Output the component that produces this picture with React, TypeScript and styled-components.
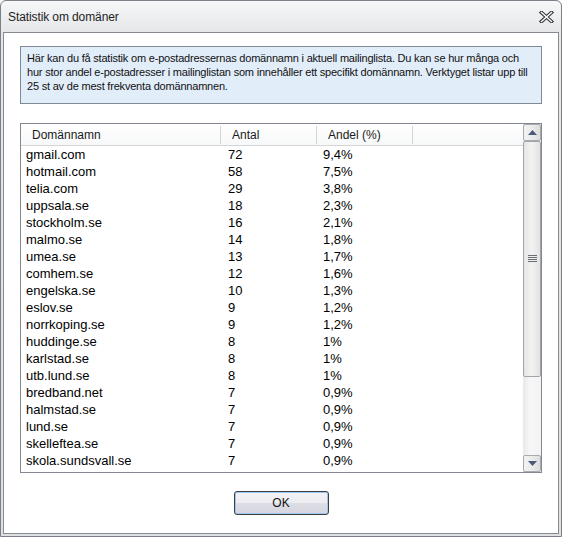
import React from 'react'
import styled, { createGlobalStyle } from 'styled-components'

const ROWS: [string, number, string][] = [
  ['gmail.com', 72, '9,4%'],
  ['hotmail.com', 58, '7,5%'],
  ['telia.com', 29, '3,8%'],
  ['uppsala.se', 18, '2,3%'],
  ['stockholm.se', 16, '2,1%'],
  ['malmo.se', 14, '1,8%'],
  ['umea.se', 13, '1,7%'],
  ['comhem.se', 12, '1,6%'],
  ['engelska.se', 10, '1,3%'],
  ['eslov.se', 9, '1,2%'],
  ['norrkoping.se', 9, '1,2%'],
  ['huddinge.se', 8, '1%'],
  ['karlstad.se', 8, '1%'],
  ['utb.lund.se', 8, '1%'],
  ['bredband.net', 7, '0,9%'],
  ['halmstad.se', 7, '0,9%'],
  ['lund.se', 7, '0,9%'],
  ['skelleftea.se', 7, '0,9%'],
  ['skola.sundsvall.se', 7, '0,9%'],
]

const GlobalStyle = createGlobalStyle`
  html, body {
    margin: 0;
    padding: 0;
    background: #ffffff;
  }
  * {
    box-sizing: border-box;
  }
`

const Window = styled.div`
  width: 562px;
  height: 537px;
  display: flex;
  flex-direction: column;
  border: 1px solid #7b8088;
  border-radius: 6px 6px 0 0;
  background: linear-gradient(#f6f7f8 0px, #e6e7e9 31px, #dfe0e2 100%);
  font-family: 'Liberation Sans', Arial, sans-serif;
  color: #000;
`

const TitleBar = styled.div`
  height: 31px;
  display: flex;
  align-items: center;
  justify-content: space-between;
  padding: 1px 7px 0 7px;
`

const Title = styled.div`
  font-size: 12px;
  letter-spacing: -0.1px;
  color: #1e1e1e;
`

const Client = styled.div`
  flex: 1;
  margin: 0 2px 2px 2px;
  border: 1px solid #868b92;
  background: #ffffff;
  padding: 13px 16px 0 16px;
  display: flex;
  flex-direction: column;
`

const InfoBox = styled.div`
  height: 58px;
  border: 1px solid #7f8a96;
  background: #e2edfa;
  padding: 4px 6px;
  font-size: 11px;
  line-height: 14px;
  letter-spacing: -0.2px;
  white-space: nowrap;
  color: #111;
`

const ListFrame = styled.div`
  margin-top: 19px;
  height: 350px;
  border: 1px solid #828790;
  display: flex;
  overflow: hidden;
`

const ListArea = styled.div`
  flex: 1;
  display: flex;
  flex-direction: column;
`

const HeaderRow = styled.div`
  height: 22px;
  display: grid;
  grid-template-columns: 200px 96px 96px 1fr;
  border-bottom: 1px solid #d5d5d5;
  background: linear-gradient(#ffffff, #f7f8f9);
`

const HeaderCell = styled.div<{ $last?: boolean }>`
  display: flex;
  align-items: center;
  padding-left: ${({ $last }) => ($last ? 0 : 11)}px;
  font-size: 12px;
  color: #1a1a1a;
  border-right: ${({ $last }) => ($last ? 'none' : '1px solid #d5d5d5')};
  margin: 2px 0 1px 0;
`

const Row = styled.div`
  height: 17px;
  display: grid;
  grid-template-columns: 200px 96px 96px 1fr;
  align-items: center;
  font-size: 13px;
`

const Cell = styled.div<{ $pad: number }>`
  padding-left: ${({ $pad }) => $pad}px;
  white-space: nowrap;
`

const ScrollBar = styled.div`
  width: 18px;
  display: flex;
  flex-direction: column;
  background: linear-gradient(90deg, #e8e8e8, #f7f7f7 40%, #f3f3f3);
`

const ArrowButton = styled.div`
  height: 17px;
  display: flex;
  align-items: center;
  justify-content: center;
  border: 1px solid #a7abb1;
  border-radius: 2px;
  background: linear-gradient(90deg, #f3f3f3, #e9e9ea 60%, #dcdcde);
`

const Thumb = styled.div`
  height: 236px;
  display: flex;
  align-items: center;
  justify-content: center;
  border: 1px solid #a1a5ab;
  border-radius: 2px;
  background: linear-gradient(90deg, #e6e6e7, #f2f2f3 50%, #e2e2e3);
`

const Track = styled.div`
  flex: 1;
`

const ButtonRow = styled.div`
  margin-top: 18px;
  display: flex;
  justify-content: center;
`

const OkButton = styled.button`
  width: 95px;
  height: 24px;
  border: 1px solid #3c3f44;
  border-radius: 3px;
  box-shadow: inset 0 0 0 1px #9ec7ee;
  background: linear-gradient(#f4f4f6 0%, #ececf1 48%, #dddde6 52%, #d6d6e0 100%);
  font-family: 'Liberation Sans', Arial, sans-serif;
  font-size: 12px;
  color: #111;
  padding: 0;
`

const CloseIcon = () => (
  <svg width="15" height="12" viewBox="0 0 15 12">
    <path d="M2.5 1.5 L12.5 10.5 M12.5 1.5 L2.5 10.5" stroke="#3a3a3a" strokeWidth="3.6" strokeLinecap="square" />
    <path d="M2.5 1.5 L12.5 10.5 M12.5 1.5 L2.5 10.5" stroke="#ffffff" strokeWidth="1.4" strokeLinecap="square" />
  </svg>
)

const Triangle = ({ down }: { down?: boolean }) => (
  <svg width="9" height="5" viewBox="0 0 9 5">
    <path d={down ? 'M0 0 L9 0 L4.5 5 Z' : 'M0 5 L9 5 L4.5 0 Z'} fill="#4a5a78" />
  </svg>
)

const Grip = () => (
  <svg width="9" height="8" viewBox="0 0 9 8">
    {[0.5, 2.5, 4.5, 6.5].map((y) => (
      <line key={y} x1="0" x2="9" y1={y} y2={y} stroke="#6a6e74" strokeWidth="1" />
    ))}
  </svg>
)

const App: React.FC = () => (
  <>
    <GlobalStyle />
    <Window>
      <TitleBar>
        <Title>Statistik om domäner</Title>
        <CloseIcon />
      </TitleBar>
      <Client>
        <InfoBox>
          Här kan du få statistik om e-postadressernas domännamn i aktuell mailinglista. Du kan se hur många och
          <br />
          hur stor andel e-postadresser i mailinglistan som innehåller ett specifikt domännamn. Verktyget listar upp till
          <br />
          25 st av de mest frekventa domännamnen.
        </InfoBox>

        <ListFrame>
          <ListArea>
            <HeaderRow>
              <HeaderCell>Domännamn</HeaderCell>
              <HeaderCell>Antal</HeaderCell>
              <HeaderCell>Andel (%)</HeaderCell>
              <HeaderCell $last />
            </HeaderRow>
            {ROWS.map(([domain, count, share]) => (
              <Row key={domain}>
                <Cell $pad={5}>{domain}</Cell>
                <Cell $pad={7}>{count}</Cell>
                <Cell $pad={6}>{share}</Cell>
                <Cell $pad={0} />
              </Row>
            ))}
          </ListArea>
          <ScrollBar>
            <ArrowButton>
              <Triangle />
            </ArrowButton>
            <Thumb>
              <Grip />
            </Thumb>
            <Track />
            <ArrowButton>
              <Triangle down />
            </ArrowButton>
          </ScrollBar>
        </ListFrame>

        <ButtonRow>
          <OkButton>OK</OkButton>
        </ButtonRow>
      </Client>
    </Window>
  </>
)

export default App
